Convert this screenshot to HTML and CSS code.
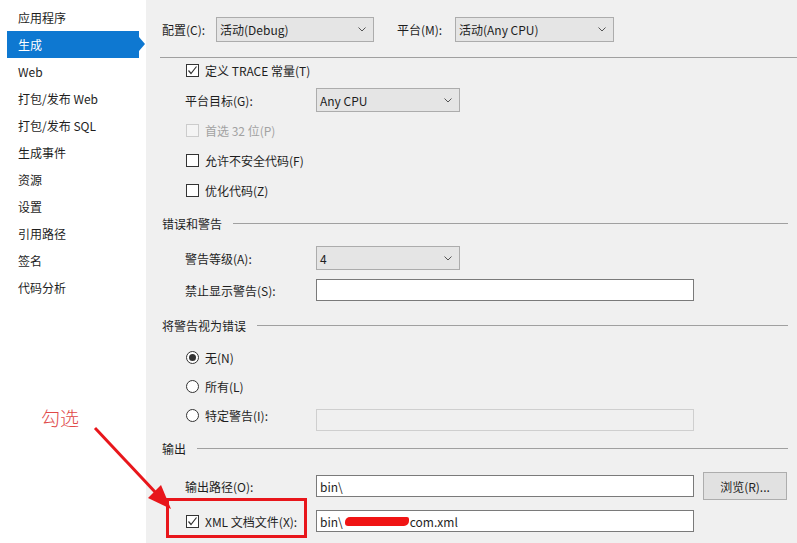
FILE: index.html
```html
<!DOCTYPE html>
<html lang="zh-CN">
<head>
<meta charset="utf-8">
<title>生成</title>
<link rel="stylesheet" href="styles.css">
</head>
<body>
<div class="page">
  <nav class="sidebar">
    <div class="nav-item">应用程序</div>
    <div class="nav-item active">生成</div>
    <div class="nav-item">Web</div>
    <div class="nav-item">打包/发布 Web</div>
    <div class="nav-item">打包/发布 SQL</div>
    <div class="nav-item">生成事件</div>
    <div class="nav-item">资源</div>
    <div class="nav-item">设置</div>
    <div class="nav-item">引用路径</div>
    <div class="nav-item">签名</div>
    <div class="nav-item">代码分析</div>
  </nav>

  <main class="panel">
    <div class="topbar">
      <span class="top-label">配置(C):</span>
      <div class="select top-select"><span>活动(Debug)</span><svg class="chev" width="8" height="5" viewBox="0 0 8 5"><polyline points="0.5,0.5 4,4 7.5,0.5" fill="none" stroke="#555" stroke-width="1"/></svg></div>
      <span class="top-label second">平台(M):</span>
      <div class="select top-select wide"><span>活动(Any CPU)</span><svg class="chev" width="8" height="5" viewBox="0 0 8 5"><polyline points="0.5,0.5 4,4 7.5,0.5" fill="none" stroke="#555" stroke-width="1"/></svg></div>
    </div>
    <div class="rule"></div>

    <div class="row first">
      <label class="check"><span class="box"><svg width="13" height="13" viewBox="0 0 13 13"><polyline points="2.5,6.5 5,9.5 10.5,2.5" fill="none" stroke="#333" stroke-width="1.2"/></svg></span>定义 TRACE 常量(T)</label>
    </div>
    <div class="row">
      <span class="label">平台目标(G):</span>
      <div class="select small"><span>Any CPU</span><svg class="chev" width="8" height="5" viewBox="0 0 8 5"><polyline points="0.5,0.5 4,4 7.5,0.5" fill="none" stroke="#555" stroke-width="1"/></svg></div>
    </div>
    <div class="row">
      <label class="check disabled"><span class="box"></span>首选 32 位(P)</label>
    </div>
    <div class="row">
      <label class="check"><span class="box"></span>允许不安全代码(F)</label>
    </div>
    <div class="row">
      <label class="check"><span class="box"></span>优化代码(Z)</label>
    </div>

    <div class="group-head h-errors">错误和警告</div>
    <div class="row mt11">
      <span class="label">警告等级(A):</span>
      <div class="select small"><span>4</span><svg class="chev" width="8" height="5" viewBox="0 0 8 5"><polyline points="0.5,0.5 4,4 7.5,0.5" fill="none" stroke="#555" stroke-width="1"/></svg></div>
    </div>
    <div class="row mt8">
      <span class="label">禁止显示警告(S):</span>
      <div class="textbox"></div>
    </div>

    <div class="group-head mt11">将警告视为错误</div>
    <div class="row mt8">
      <label class="check"><span class="radio on"></span>无(N)</label>
    </div>
    <div class="row mt5">
      <label class="check"><span class="radio"></span>所有(L)</label>
    </div>
    <div class="row mt5">
      <label class="check label"><span class="radio"></span>特定警告(I):</label>
      <div class="textbox disabled low"></div>
    </div>

    <div class="group-head h-output">输出</div>
    <div class="row mt14">
      <span class="label">输出路径(O):</span>
      <div class="textbox">bin\</div>
      <button class="btn">浏览(R)...</button>
    </div>
    <div class="row mt11">
      <label class="check label"><span class="box"><svg width="13" height="13" viewBox="0 0 13 13"><polyline points="2.5,6.5 5,9.5 10.5,2.5" fill="none" stroke="#333" stroke-width="1.2"/></svg></span>XML 文档文件(X):</label>
      <div class="textbox">bin\<span class="redact"></span>com.xml</div>
    </div>
  </main>

  <div class="note">勾选</div>
  <svg class="arrow" width="797" height="543" viewBox="0 0 797 543">
    <line x1="95" y1="428" x2="157" y2="494" stroke="#e8161b" stroke-width="3"/>
    <polygon points="171,509 148,498 161,485" fill="#e8161b"/>
  </svg>
  <div class="mark-box"></div>
</div>
</body>
</html>
```

FILE: styles.css
```css
html, body {
  margin: 0;
  padding: 0;
}

body {
  font-family: "Noto Sans CJK SC", "Microsoft YaHei", "Liberation Sans", sans-serif;
  font-size: 12px;
  color: #1e1e1e;
  background: #ffffff;
}

.page {
  position: relative;
  width: 797px;
  height: 543px;
  display: flex;
  overflow: hidden;
}

/* sidebar */
.sidebar {
  width: 146px;
  flex: none;
  background: #ffffff;
  padding-top: 4px;
  box-sizing: border-box;
}

.nav-item {
  position: relative;
  height: 27px;
  line-height: 27px;
  width: 132px;
  margin-left: 7px;
  padding-left: 11px;
  box-sizing: border-box;
  white-space: nowrap;
}

.nav-item.active {
  background: #0e78d1;
  color: #ffffff;
}

.nav-item.active::after {
  content: "";
  position: absolute;
  right: -6px;
  top: 6px;
  border-left: 6px solid #0e78d1;
  border-top: 7px solid transparent;
  border-bottom: 7px solid transparent;
}

/* main panel */
.panel {
  flex: 1;
  background: #f0f0f0;
  padding: 0 9px 0 14px;
  box-sizing: border-box;
}

.topbar {
  display: flex;
  align-items: center;
  height: 25px;
  padding-top: 17px;
  padding-left: 2px;
}

.top-label {
  width: 54px;
  flex: none;
  white-space: nowrap;
}

.top-label.second {
  width: 58px;
  margin-left: 23px;
}

.select {
  display: flex;
  align-items: center;
  justify-content: space-between;
  box-sizing: border-box;
  background: #e5e5e5;
  border: 1px solid #acacac;
  padding: 0 7px 0 3px;
  white-space: nowrap;
}

.top-select {
  width: 158px;
  height: 25px;
}

.top-select.wide {
  width: 159px;
}

.select.small {
  width: 144px;
  height: 24px;
}

.chev {
  flex: none;
}

.rule {
  height: 1px;
  background: #a0a0a0;
  margin-top: 15px;
  margin-right: -9px;
}

/* rows */
.row {
  display: flex;
  align-items: center;
  height: 24px;
  margin-top: 6px;
  padding-left: 25px;
}

.row.first { margin-top: 0; }
.row.mt5 { margin-top: 5px; }
.row.mt8 { margin-top: 8px; }
.row.mt11 { margin-top: 11px; }
.row.mt14 { margin-top: 14px; }

.label {
  width: 131px;
  flex: none;
  white-space: nowrap;
}

.check {
  display: flex;
  align-items: center;
  white-space: nowrap;
}

.check.disabled {
  color: #a2a2a2;
}

.box {
  width: 13px;
  height: 13px;
  box-sizing: border-box;
  border: 1px solid #333333;
  background: #ffffff;
  margin: 0 6px 0 1px;
  flex: none;
  position: relative;
}

.box svg {
  position: absolute;
  left: -1px;
  top: -1px;
}

.check.disabled .box {
  border-color: #cccccc;
  background: #f4f4f4;
}

.radio {
  width: 13px;
  height: 13px;
  box-sizing: border-box;
  border: 1px solid #333333;
  border-radius: 50%;
  background: #ffffff;
  margin: 0 6px 0 1px;
  flex: none;
  display: flex;
  align-items: center;
  justify-content: center;
}

.radio.on::before {
  content: "";
  width: 7px;
  height: 7px;
  border-radius: 50%;
  background: #333333;
}

.textbox {
  width: 378px;
  height: 22px;
  box-sizing: border-box;
  border: 1px solid #7a7a7a;
  background: #ffffff;
  padding-left: 3px;
  display: flex;
  align-items: center;
  white-space: nowrap;
  flex: none;
}

.textbox.disabled {
  background: #f0f0f0;
  border-color: #cfcfcf;
}

.textbox.low {
  margin-top: 10px;
}

.redact {
  display: inline-block;
  width: 64px;
  height: 9px;
  margin: 1px 1px 0 2px;
  background: #f01414;
  border-radius: 5px 2px 5px 3px;
}

.btn {
  margin-left: 9px;
  width: 84px;
  height: 28px;
  flex: none;
  box-sizing: border-box;
  background: #e1e1e1;
  border: 1px solid #adadad;
  font-family: inherit;
  font-size: 12px;
  color: #1e1e1e;
  padding: 0;
}

/* group headers */
.group-head {
  display: flex;
  align-items: center;
  height: 24px;
  padding-left: 2px;
  white-space: nowrap;
}

.group-head::after {
  content: "";
  flex: 1;
  height: 1px;
  background: #a0a0a0;
  margin-left: 11px;
}

.group-head.h-errors { margin-top: 9px; }
.group-head.mt11 { margin-top: 11px; }
.group-head.h-output { margin-top: 9px; }

/* annotation overlays */
.note {
  position: absolute;
  left: 41px;
  top: 405px;
  font-size: 19px;
  line-height: 26px;
  color: #e04848;
  font-weight: 300;
}

.arrow {
  position: absolute;
  left: 0;
  top: 0;
  pointer-events: none;
}

.mark-box {
  position: absolute;
  left: 166px;
  top: 498px;
  width: 141px;
  height: 40px;
  box-sizing: border-box;
  border: 3px solid #e8161b;
}
```
